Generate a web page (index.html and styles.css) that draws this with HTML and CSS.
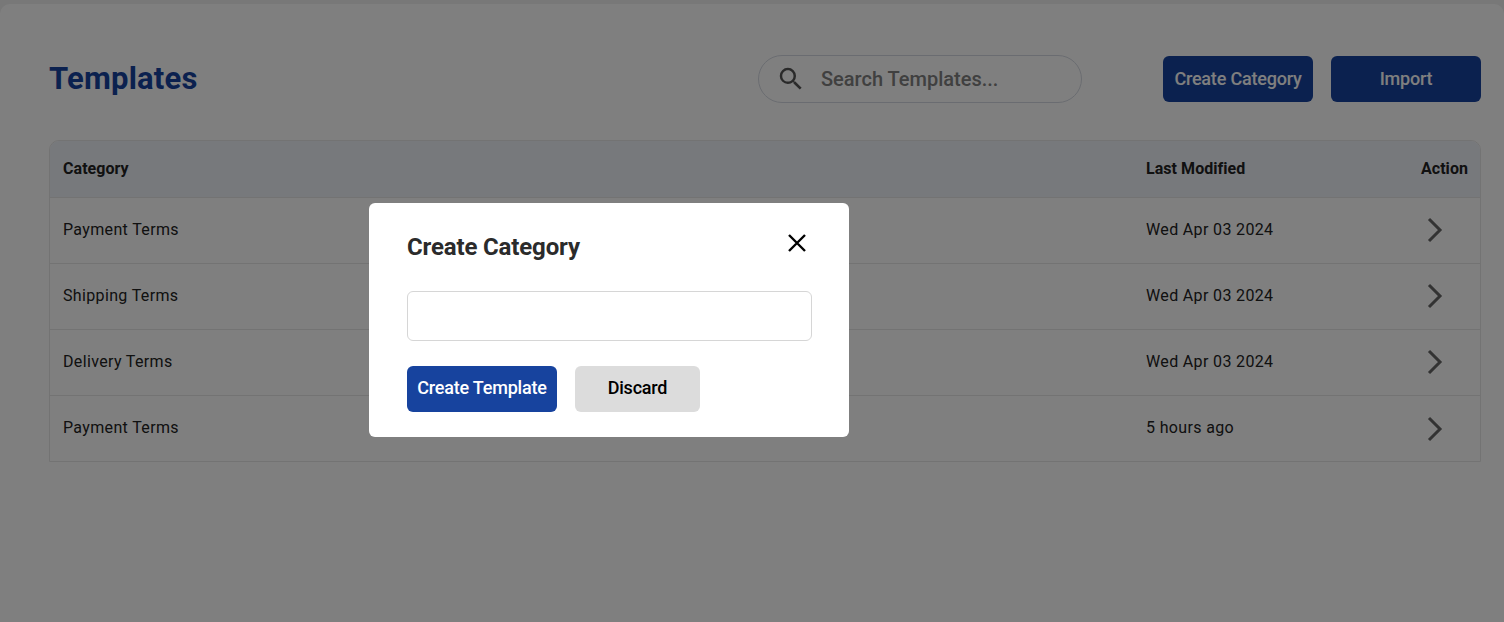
FILE: index.html
```html
<!DOCTYPE html>
<html lang="en">
<head>
<meta charset="utf-8">
<title>Templates</title>
<link rel="stylesheet" href="styles.css">
</head>
<body>
<div class="shell">
  <main class="panel">
    <header class="topbar">
      <h1 class="title">Templates</h1>
      <div class="search">
        <svg class="search-icon" viewBox="0 0 24 24"><path d="M15.5 14h-.79l-.28-.27A6.47 6.47 0 0 0 16 9.5 6.5 6.5 0 1 0 9.5 16c1.61 0 3.09-.59 4.23-1.57l.27.28v.79l5 4.99L20.49 19l-4.99-5zm-6 0C7.01 14 5 11.99 5 9.5S7.01 5 9.5 5 14 7.01 14 9.5 11.99 14 9.5 14z"/></svg>
        <span class="search-text">Search Templates...</span>
      </div>
      <button class="btn btn-primary btn-top">Create Category</button>
      <button class="btn btn-primary btn-import">Import</button>
    </header>
    <section class="table">
      <div class="row head">
        <span class="cell-name">Category</span>
        <span class="cell-date">Last Modified</span>
        <span class="cell-action">Action</span>
      </div>
      <div class="row">
        <span class="cell-name">Payment Terms</span>
        <span class="cell-date">Wed Apr 03 2024</span>
        <span class="cell-action"><svg class="chev" viewBox="0 0 24 32"><path d="M5 5 16 16 5 27"/></svg></span>
      </div>
      <div class="row">
        <span class="cell-name">Shipping Terms</span>
        <span class="cell-date">Wed Apr 03 2024</span>
        <span class="cell-action"><svg class="chev" viewBox="0 0 24 32"><path d="M5 5 16 16 5 27"/></svg></span>
      </div>
      <div class="row">
        <span class="cell-name">Delivery Terms</span>
        <span class="cell-date">Wed Apr 03 2024</span>
        <span class="cell-action"><svg class="chev" viewBox="0 0 24 32"><path d="M5 5 16 16 5 27"/></svg></span>
      </div>
      <div class="row row-last">
        <span class="cell-name">Payment Terms</span>
        <span class="cell-date">5 hours ago</span>
        <span class="cell-action"><svg class="chev" viewBox="0 0 24 32"><path d="M5 5 16 16 5 27"/></svg></span>
      </div>
    </section>
  </main>
</div>
<div class="overlay">
  <div class="modal">
    <div class="modal-head">
      <h2 class="modal-title">Create Category</h2>
      <svg class="close" viewBox="0 0 18 18"><path d="M1 1 17 17M17 1 1 17"/></svg>
    </div>
    <input class="modal-input" type="text">
    <div class="modal-actions">
      <button class="btn btn-blue">Create Template</button>
      <button class="btn btn-grey">Discard</button>
    </div>
  </div>
</div>
</body>
</html>
```

FILE: styles.css
```css
* { box-sizing: border-box; }
html, body { margin: 0; height: 100%; }
body { font-family: Roboto, "Liberation Sans", sans-serif; background: #f5f5f5; overflow: hidden; }
.shell { height: 100vh; padding-top: 4px; background: #f0f0f0; }
.panel { height: 100%; padding: 51px 23px 0 49px; background: #fff; border-radius: 10px 10px 0 0; }
.topbar { display: flex; align-items: center; height: 48px; }
.title { margin: 0 0 2px; flex: 1; font-size: 31px; font-weight: 700; letter-spacing: 0.2px; color: #17439e; }
.search { display: flex; align-items: center; width: 324px; height: 48px; margin-right: 81px; padding-left: 17px; border: 1px solid #d5d9e2; border-radius: 24px; }
.search-icon { width: 30px; height: 30px; fill: #555; flex: none; }
.search-text { margin-left: 15px; font-size: 20px; font-weight: 500; color: #808080; }
.btn { display: block; border: 0; border-radius: 6px; font-family: inherit; font-size: 18px; font-weight: 500; letter-spacing: -0.2px; padding: 0 0 2px; height: 46px; }
.btn-primary { background: #17439e; color: #fff; }
.btn-top { width: 150px; margin-right: 18px; }
.btn-import { width: 150px; }
.table { margin-top: 37px; border: 1px solid #e6e6e6; border-radius: 10px 10px 0 0; }
.row { display: flex; align-items: center; height: 66px; padding: 0 12px 2px 13px; font-size: 16px; letter-spacing: 0.35px; color: #222; border-top: 1px solid #e6e6e6; }
.row.head { height: 56px; border-top: 0; background: #eff2f9; font-weight: 700; letter-spacing: 0.05px; color: #222; border-radius: 9px 9px 0 0; }
.cell-name { flex: 1; }
.cell-date { width: 235px; }
.cell-action { width: 87px; display: flex; justify-content: flex-end; }
.chev { width: 24px; height: 32px; fill: none; stroke: #666; stroke-width: 3; margin-right: 20px; display: block; }
.row-last .chev { margin-bottom: -2px; }
.overlay { position: fixed; inset: 0; background: rgba(0, 0, 0, 0.5); }
.modal { position: absolute; left: 369px; top: 203px; width: 480px; height: 234px; padding: 28px 37px 0 38px; background: #fff; border-radius: 6px; }
.modal-head { display: flex; justify-content: space-between; height: 60px; }
.modal-title { margin: 0; font-size: 24px; font-weight: 700; letter-spacing: -0.15px; color: #2b2b2b; line-height: 32px; }
.close { width: 18px; height: 18px; fill: none; stroke: #000; stroke-width: 2.4; margin-top: 3px; margin-right: 6px; }
.modal-input { display: block; width: 405px; height: 50px; border: 1px solid #d6d6d6; border-radius: 6px; background: #fff; }
.modal-actions { display: flex; gap: 18px; margin-top: 25px; }
.modal-actions .btn { padding-bottom: 4px; }
.btn-blue { width: 150px; background: #17439e; color: #fff; }
.btn-grey { width: 125px; background: #dcdcdc; color: #000; }
```
